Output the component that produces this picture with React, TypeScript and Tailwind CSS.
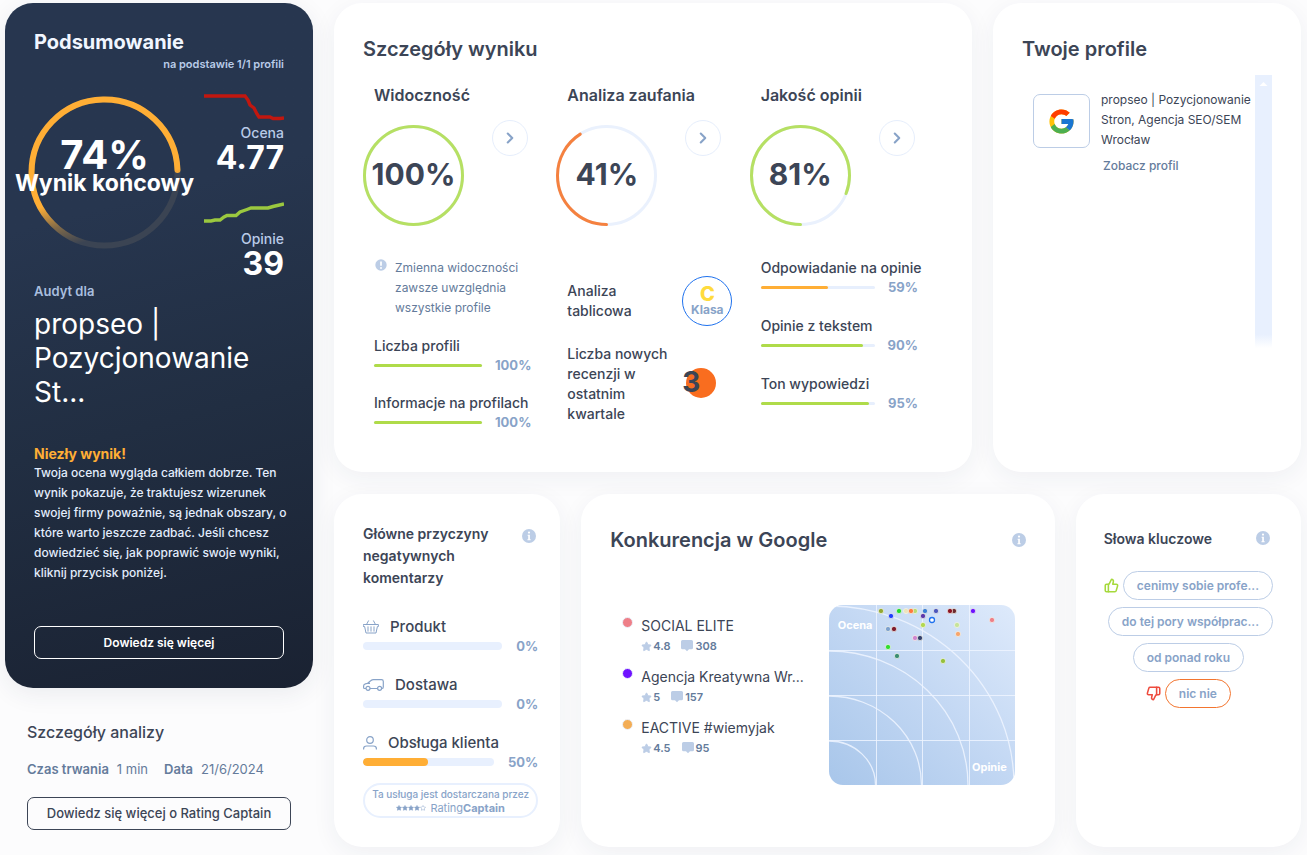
import { ChevronRight, Star, ThumbsDown, ThumbsUp } from "lucide-react";
import { FcGoogle } from "react-icons/fc";
import clsx from "clsx";

const card = "rounded-[28px] bg-white shadow-[0_6px_24px_rgba(40,50,80,0.06)]";

function InfoIcon() {
  return (
    <svg viewBox="0 0 14 14" className="size-[14px]" aria-hidden="true">
      <circle cx="7" cy="7" r="7" fill="#bccde6" />
      <circle cx="7" cy="3.6" r="1.1" fill="#fff" />
      <path d="M5.6 5.8h2.3v4.4h.8v1H5.4v-1h.8V6.8h-.6z" fill="#fff" />
    </svg>
  );
}

function InfoButton({ label }: { label: string }) {
  return (
    <button type="button" aria-label={label} className="size-[14px] shrink-0">
      <InfoIcon />
    </button>
  );
}

function Ring({ value, color }: { value: number; color: string }) {
  return (
    <div className="relative flex size-[101px] shrink-0 items-center justify-center">
      <svg viewBox="0 0 101 101" className="absolute inset-0 size-full" fill="none" strokeWidth="3">
        <circle cx="50.5" cy="50.5" r="49" stroke="#eaf1fd" />
        <circle
          cx="50.5"
          cy="50.5"
          r="49"
          stroke={color}
          pathLength={100}
          strokeDasharray={`${value} 100`}
          strokeLinecap={value < 100 ? "round" : "butt"}
          transform="rotate(90 50.5 50.5)"
        />
      </svg>
      <span className="relative pb-1 text-[30px] leading-8 font-bold">{value}%</span>
    </div>
  );
}

function ScoreHead({ title, value, color }: { title: string; value: number; color: string }) {
  return (
    <div>
      <h3 className="pl-[11px] text-[16px] leading-6 font-semibold whitespace-nowrap">{title}</h3>
      <div className="mt-[13px] flex items-start gap-7">
        <div className="mt-[5px]">
          <Ring value={value} color={color} />
        </div>
        <button
          type="button"
          aria-label={title}
          className="flex size-9 items-center justify-center rounded-full border border-[#e6eefc] text-[#88a3c8]"
        >
          <ChevronRight size={18} strokeWidth={2.8} />
        </button>
      </div>
    </div>
  );
}

function Metric({ label, value }: { label: string; value: number }) {
  return (
    <div>
      <p className="text-[14px] leading-5 font-medium whitespace-nowrap">{label}</p>
      <div className="flex h-[18px] items-center justify-between">
        <div className="mr-[13px] h-[3px] flex-1 rounded-full bg-[#e7effd]">
          <div
            className={clsx("h-full rounded-full", value < 60 ? "bg-[#ffae35]" : "bg-[#afdb49]")}
            style={{ width: `${value}%` }}
          />
        </div>
        <span className="min-w-[28px] text-right text-[13px] leading-[18px] font-bold text-[#88a3c8]">{value}%</span>
      </div>
    </div>
  );
}

function Summary() {
  return (
    <section className="rounded-[28px] bg-linear-165 from-[#27364f] from-30% via-[#212e42] via-60% to-[#1a2232] px-[29px] pt-[25px] pb-[29px] text-white shadow-[0_6px_24px_rgba(40,50,80,0.08)]">
      <h2 className="text-[20px] leading-7 font-bold text-[#f1f6ff]">Podsumowanie</h2>
      <p className="text-right text-[11px] leading-4 font-semibold text-[#b9cbe8]">na podstawie 1/1 profili</p>

      <div className="mt-[22px] flex justify-between">
        <div className="relative mt-[2px] -ml-[6px] flex h-[153px] w-[153px] shrink-0 flex-col items-center">
          <svg viewBox="0 0 153 153" className="absolute inset-0 size-full" fill="none" strokeWidth="6">
            <defs>
              <linearGradient id="score" x1="0" y1="0" x2="0.28" y2="1">
                <stop offset="0.7" stopColor="#ffae35" />
                <stop offset="0.86" stopColor="#ffae35" stopOpacity="0.35" />
                <stop offset="1" stopColor="#ffae35" stopOpacity="0" />
              </linearGradient>
            </defs>
            <circle cx="76.5" cy="76.5" r="73" stroke="#3b4453" />
            <path d="M76.5 149.5A73 73 0 1 1 149.5 74" stroke="url(#score)" strokeLinecap="round" />
          </svg>
          <strong className="relative mt-[41px] text-[40px] leading-9 font-bold">74%</strong>
          <span className="relative text-[23px] leading-5 font-bold whitespace-nowrap">Wynik końcowy</span>
        </div>

        <div className="flex w-20 flex-col items-end text-right">
          <svg viewBox="0 0 80 30" className="h-[30px] w-20" fill="none">
            <path d="M0 2h41l3 4 2 5 4 3 3 6 2 3h11l3 1.5h7l4-.5" stroke="#c2170f" strokeWidth="3.4" />
          </svg>
          <p className="text-[14px] leading-[18px] font-medium text-[#b9cbe8]">Ocena</p>
          <strong className="text-[32px] leading-8 font-bold">4.77</strong>
          <svg viewBox="0 0 80 24" className="mt-[26px] mb-[6px] h-6 w-20" fill="none">
            <path d="M0 21h7l4-1h5l4-3 3-1.5h9l4-3.5 7-2.5 4-1.5h17l5-1.5 11-2.5" stroke="#9bc83f" strokeWidth="3.4" />
          </svg>
          <p className="text-[14px] leading-[18px] font-medium text-[#b9cbe8]">Opinie</p>
          <strong className="text-[32px] leading-8 font-bold">39</strong>
        </div>
      </div>

      <p className="mt-px text-[13px] leading-5 font-semibold text-[#a9bedf]">Audyt dla</p>
      <h1 className="mt-[6px] text-[28px] leading-[34px]">propseo | Pozycjonowanie St...</h1>
      <p className="mt-9 text-[14px] leading-[18px] font-bold text-[#ffae35]">Niezły wynik!</p>
      <p className="text-[12px] leading-5 font-medium whitespace-nowrap text-[#e3edfd]">
        Twoja ocena wygląda całkiem dobrze. Ten
        <br />
        wynik pokazuje, że traktujesz wizerunek
        <br />
        swojej firmy poważnie, są jednak obszary, o
        <br />
        które warto jeszcze zadbać. Jeśli chcesz
        <br />
        dowiedzieć się, jak poprawić swoje wyniki,
        <br />
        kliknij przycisk poniżej.
      </p>
      <button
        type="button"
        className="mt-[43px] h-[33px] w-full rounded-[7px] border border-white text-[12px] font-semibold"
      >
        Dowiedz się więcej
      </button>
    </section>
  );
}

function AnalysisDetails() {
  return (
    <section className="mt-8 px-[22px]">
      <h2 className="text-[16px] leading-6 font-medium">Szczegóły analizy</h2>
      <dl className="mt-[15px] flex text-[13px] leading-5 text-[#647b9b]">
        <dt className="font-semibold">Czas trwania</dt>
        <dd className="ml-2">1 min</dd>
        <dt className="ml-4 font-semibold">Data</dt>
        <dd className="ml-2">21/6/2024</dd>
      </dl>
      <button
        type="button"
        className="mt-[18px] h-[33px] w-full rounded-[7px] border border-[#3c4556] text-[13px] font-medium whitespace-nowrap"
      >
        Dowiedz się więcej o Rating Captain
      </button>
    </section>
  );
}

function ScoreDetails() {
  return (
    <section className={clsx(card, "px-[29px] pt-8 pb-[41px]")}>
      <h2 className="text-[20px] leading-7 font-semibold">Szczegóły wyniku</h2>
      <div className="mt-5 grid grid-cols-3">
        <ScoreHead title="Widoczność" value={100} color="#b6e063" />
        <ScoreHead title="Analiza zaufania" value={41} color="#f5813f" />
        <ScoreHead title="Jakość opinii" value={81} color="#b6e063" />
      </div>

      <div className="mt-8 grid grid-cols-3">
        <div className="pr-[25px] pl-[11px]">
          <div className="flex gap-2">
            <svg viewBox="0 0 12 12" className="mt-px ml-px size-3 shrink-0" aria-hidden="true">
              <circle cx="6" cy="6" r="5.7" fill="#bccde6" />
              <path d="M6 2.5v4.2" stroke="#fff" strokeWidth="1.7" />
              <circle cx="6" cy="8.9" r="1" fill="#fff" />
            </svg>
            <p className="text-[12px] leading-5 whitespace-nowrap text-[#647b9b]">
              Zmienna widoczności
              <br />
              zawsze uwzględnia
              <br />
              wszystkie profile
            </p>
          </div>
          <div className="mt-[18px] flex flex-col gap-[19px]">
            <Metric label="Liczba profili" value={100} />
            <Metric label="Informacje na profilach" value={100} />
          </div>
        </div>

        <div className="pt-[18px] pl-[11px] text-[14px] leading-5 font-medium">
          <div className="flex items-center">
            <p className="w-[115px]">
              Analiza
              <br />
              tablicowa
            </p>
            <div className="flex size-[50px] flex-col items-center justify-center rounded-full border border-[#1f72ee]">
              <strong className="text-[20px] leading-[18px] font-extrabold text-[#ffdb3d]">C</strong>
              <span className="text-[12px] leading-[14px] font-bold text-[#88a3c8]">Klasa</span>
            </div>
          </div>
          <div className="mt-[18px] flex items-center">
            <p className="w-[115px] whitespace-nowrap">
              Liczba nowych
              <br />
              recenzji w
              <br />
              ostatnim
              <br />
              kwartale
            </p>
            <div className="relative flex h-8 items-center">
              <span className="absolute top-0 left-1 size-[30px] rounded-full bg-[#f96d1f]" />
              <strong className="relative pb-1 text-[28px] leading-7 font-bold">3</strong>
            </div>
          </div>
        </div>

        <div className="flex flex-col gap-5 pr-[25px] pl-[11px]">
          <Metric label="Odpowiadanie na opinie" value={59} />
          <Metric label="Opinie z tekstem" value={90} />
          <Metric label="Ton wypowiedzi" value={95} />
        </div>
      </div>
    </section>
  );
}

function Profiles() {
  return (
    <section className={clsx(card, "px-[29px] pt-8")}>
      <h2 className="text-[20px] leading-7 font-semibold">Twoje profile</h2>
      <div className="mt-3 flex h-[273px] justify-between">
        <div className="flex gap-[11px] pt-[15px] pl-[11px]">
          <div className="mt-1 flex h-[54px] w-[57px] shrink-0 items-center justify-center rounded-[7px] border border-[#bccde6]">
            <FcGoogle size={29} />
          </div>
          <div className="text-[12px] leading-5 whitespace-nowrap">
            <p>
              propseo | Pozycjonowanie
              <br />
              Stron, Agencja SEO/SEM
              <br />
              Wrocław
            </p>
            <a href="#profil" className="mt-[6px] ml-[2px] block font-medium text-[#647b9b]">
              Zobacz profil
            </a>
          </div>
        </div>
        <div className="w-[17px] shrink-0 bg-linear-to-b from-[#e8f0fe] from-95% to-white">
          <svg viewBox="0 0 17 17" className="size-[17px]" aria-hidden="true">
            <path d="M4.5 11h8l-4-4z" fill="#fff" />
          </svg>
        </div>
      </div>
    </section>
  );
}

const reasons = [
  {
    label: "Produkt",
    value: 0,
    icon: (
      <svg viewBox="0 0 16 14" className="h-[14px] w-4" fill="none" stroke="#88a3c8" strokeLinecap="round">
        <path d="M.6 4.5h14.8v2h-1L13 13H3L1.6 6.5h-1zM3.500 4.500 5.500.8M12.500 4.500l-2-3.700M5 6.800v4.400M8 6.800v4.400M11 6.800v4.400" />
      </svg>
    ),
  },
  {
    label: "Dostawa",
    value: 0,
    icon: (
      <svg viewBox="0 0 21 12" className="h-3 w-[21px]" fill="none" stroke="#88a3c8" strokeWidth="1.2">
        <path d="M3 9.500H1.500Q.6 9.500.6 8.500V7q0-1.800 1.800-2.200l2.200-.5L8 1.500Q9 .6 10.500.6h8q1.800 0 1.800 1.800v5.500q0 1.600-1.600 1.600M7 9.500h7.500M4.600 4.300H7" />
        <circle cx="5" cy="9.3" r="2" />
        <circle cx="16.6" cy="9.3" r="2" />
      </svg>
    ),
  },
  {
    label: "Obsługa klienta",
    value: 50,
    icon: (
      <svg viewBox="0 0 14 14" className="size-[14px]" fill="none" stroke="#88a3c8" strokeWidth="1.2">
        <circle cx="7" cy="4" r="3.3" />
        <path d="M.6 13.500v-.8q0-2.700 3-2.700h6.800q3 0 3 2.700v.8" />
      </svg>
    ),
  },
];

function NegativeReasons() {
  return (
    <section className={clsx(card, "pt-[29px] pr-[22px] pb-[29px] pl-[29px]")}>
      <div className="flex items-start justify-between">
        <h2 className="text-[14px] leading-[22px] font-semibold whitespace-nowrap">
          Główne przyczyny
          <br />
          negatywnych
          <br />
          komentarzy
        </h2>
        <div className="mt-[2px] mr-[2px]">
          <InfoButton label="Główne przyczyny" />
        </div>
      </div>
      <div className="mt-7 flex flex-col gap-5">
        {reasons.map((reason) => (
          <div key={reason.label}>
            <div className="flex items-center gap-[11px]">
              {reason.icon}
              <p className="text-[15px] leading-5 font-medium whitespace-nowrap">{reason.label}</p>
            </div>
            <div className="flex h-[18px] items-center gap-[14px]">
              <div className="h-2 flex-1 overflow-hidden rounded-full bg-[#e8f0fe]">
                <div className="h-full rounded-full bg-[#ffae35]" style={{ width: `${reason.value}%` }} />
              </div>
              <span className="text-[13px] leading-[18px] font-bold text-[#88a3c8]">{reason.value}%</span>
            </div>
          </div>
        ))}
      </div>
      <div className="mt-3 flex h-[35px] flex-col items-center justify-center rounded-full border-2 border-[#e8f0fe] text-[10px] leading-[14px] whitespace-nowrap text-[#88a3c8]">
        <p className="font-medium">Ta usługa jest dostarczana przez</p>
        <p className="flex items-center text-[11px]">
          {[1, 2, 3, 4, 5].map((n) => (
            <Star key={n} size={6} fill={n < 5 ? "currentColor" : "none"} />
          ))}
          <span className="ml-1">Rating</span>
          <b className="font-bold">Captain</b>
        </p>
      </div>
    </section>
  );
}

const competitors = [
  { name: "SOCIAL ELITE", rating: "4.8", reviews: 308, color: "bg-[#ee7f88]" },
  { name: "Agencja Kreatywna Wr...", rating: "5", reviews: 157, color: "bg-[#6f12ff]" },
  { name: "EACTIVE #wiemyjak", rating: "4.5", reviews: 95, color: "bg-[#f3ad55]" },
];

const points: [number, number, string][] = [
  [52, 6, "#93a832"],
  [70, 6, "#24d930"],
  [77, 6, "#ece5bd"],
  [86, 6, "#b9dc74"],
  [82, 6, "#ff7a3c"],
  [96, 6, "#3b7ed6"],
  [107, 6, "#4c57bd"],
  [125, 6, "#6b2a30"],
  [121, 6, "#8c1524"],
  [144, 6, "#6b12ff"],
  [62, 11, "#1f3dff"],
  [94, 11, "#5c37ab"],
  [163, 15, "#ee7f88"],
  [94, 20, "#b3d84f"],
  [128, 20, "#c6e49a"],
  [129, 29, "#f7a56d"],
  [59, 24, "#7da1ce"],
  [65, 24, "#7d1a2b"],
  [86, 33, "#cf86cf"],
  [91, 33, "#33416c"],
  [59, 42, "#30dd30"],
  [68, 51, "#3a8d72"],
  [114, 56, "#95c03c"],
];

function CompetitionChart() {
  return (
    <div className="relative h-[180px] w-[186px] shrink-0 overflow-hidden rounded-[14px] bg-linear-to-tr from-[#a8c6ea] via-[#c2d7f3] to-[#deeafb]">
      <svg viewBox="0 0 186 180" className="size-full" fill="none">
        <g stroke="#eef5ff" strokeOpacity="0.85">
          <path d="M47.500 0v180M93.500 0v180M140.500 0v180M0 45.500h186M0 90.500h186M0 135.500h186" />
          <path
            d="M0 136a46.500 44 0 0 1 46.500 44M0 91a92.500 89 0 0 1 92.500 89M0 46a139 134 0 0 1 139 134M0 1a185 179 0 0 1 185 179"
            strokeWidth="1.3"
          />
        </g>
        {points.map(([x, y, color]) => (
          <circle key={`${x}-${y}`} cx={x} cy={y} r="2.6" fill={color} stroke="#f4f4ea" strokeWidth="0.7" />
        ))}
        <circle cx="103" cy="15" r="2.5" fill="#fff" stroke="#1f72ee" strokeWidth="1.3" />
      </svg>
      <span className="absolute top-3 left-[9px] text-[11px] leading-4 font-bold text-white">Ocena</span>
      <span className="absolute right-2 bottom-[10px] text-[11px] leading-4 font-bold text-white">Opinie</span>
    </div>
  );
}

function Competition() {
  return (
    <section className={clsx(card, "px-[29px] pt-8")}>
      <div className="flex items-center justify-between">
        <h2 className="text-[20px] leading-7 font-semibold whitespace-nowrap">Konkurencja w Google</h2>
        <InfoButton label="Konkurencja w Google" />
      </div>
      <div className="mt-[51px] flex justify-between gap-3 pr-[11px]">
        <ul className="flex flex-col gap-[11px] pt-[11px] pl-3">
          {competitors.map((item) => (
            <li key={item.name} className="flex gap-2">
              <span className={clsx("mt-px size-[11px] shrink-0 rounded-full border border-[#edf3fd]", item.color)} />
              <div>
                <p className="text-[14px] leading-5 whitespace-nowrap">{item.name}</p>
                <p className="flex h-5 items-center text-[11px] leading-5 font-semibold text-[#647b9b]">
                  <Star size={11} fill="#bccde6" stroke="#bccde6" className="mr-px" />
                  {item.rating}
                  <svg viewBox="0 0 12 12" className="mr-[2px] ml-[11px] size-3" fill="#bccde6" aria-hidden="true">
                    <path d="M1.500 0h9Q12 0 12 1.500v6.300q0 1.500-1.500 1.500H8l-2 2-2-2H1.500Q0 9.300 0 7.800V1.500Q0 0 1.500 0z" />
                  </svg>
                  {item.reviews}
                </p>
              </div>
            </li>
          ))}
        </ul>
        <CompetitionChart />
      </div>
    </section>
  );
}

const chip =
  "h-[29px] rounded-full border px-[13px] text-[12px] leading-[27px] font-semibold whitespace-nowrap text-[#88a3c8]";

function Keywords() {
  return (
    <section className={clsx(card, "px-7 pt-[33px]")}>
      <div className="flex items-center justify-between">
        <h2 className="text-[14px] leading-5 font-semibold whitespace-nowrap">Słowa kluczowe</h2>
        <div className="mr-[3px]">
          <InfoButton label="Słowa kluczowe" />
        </div>
      </div>
      <ul className="mt-5 flex flex-col items-center gap-[7px]">
        <li className="flex items-center gap-1 self-end">
          <ThumbsUp size={15} strokeWidth={2.5} className="text-[#a6d93c]" />
          <span className={clsx(chip, "border-[#bccde6]")}>cenimy sobie profe...</span>
        </li>
        <li className={clsx(chip, "self-end border-[#bccde6]")}>do tej pory współprac...</li>
        <li className={clsx(chip, "border-[#bccde6]")}>od ponad roku</li>
        <li className="flex items-center gap-1">
          <ThumbsDown size={15} strokeWidth={2.5} className="text-[#ee4b3d]" />
          <span className={clsx(chip, "border-[#f3752f]")}>nic nie</span>
        </li>
      </ul>
    </section>
  );
}

export default function App() {
  return (
    <main className="grid min-h-screen grid-cols-[minmax(0,308fr)_minmax(0,967fr)] items-start gap-[21px] bg-[#fcfcfd] pt-[3px] pr-[6px] pb-[9px] pl-[5px] font-[Inter,sans-serif] text-[#3c4556]">
      <div>
        <Summary />
        <AnalysisDetails />
      </div>
      <div className="flex flex-col gap-[22px]">
        <div className="grid grid-cols-[minmax(0,638fr)_minmax(0,308fr)] gap-[21px]">
          <ScoreDetails />
          <Profiles />
        </div>
        <div className="grid grid-cols-[minmax(0,226fr)_minmax(0,473fr)_minmax(0,225fr)] gap-[21px]">
          <NegativeReasons />
          <Competition />
          <Keywords />
        </div>
      </div>
    </main>
  );
}
